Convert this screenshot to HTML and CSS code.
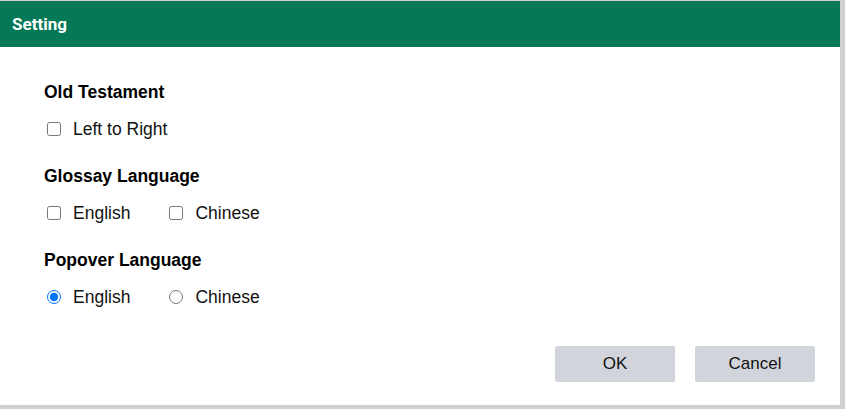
FILE: index.html
```html
<!DOCTYPE html>
<html>
<head>
<meta charset="utf-8">
<link rel="stylesheet" href="styles.css">
</head>
<body>
<div class="dialog">
  <div class="dialog-header">Setting</div>
  <div class="dialog-body">
    <div class="section">
      <div class="section-title">Old Testament</div>
      <div class="options">
        <label class="option"><input type="checkbox"><span>Left to Right</span></label>
      </div>
    </div>
    <div class="section">
      <div class="section-title">Glossay Language</div>
      <div class="options">
        <label class="option"><input type="checkbox"><span>English</span></label>
        <label class="option"><input type="checkbox"><span>Chinese</span></label>
      </div>
    </div>
    <div class="section">
      <div class="section-title">Popover Language</div>
      <div class="options">
        <label class="option"><input type="radio" name="pop" checked><span>English</span></label>
        <label class="option"><input type="radio" name="pop"><span>Chinese</span></label>
      </div>
    </div>
  </div>
  <div class="dialog-footer">
    <button class="btn">OK</button>
    <button class="btn">Cancel</button>
  </div>
</div>
</body>
</html>
```
FILE: styles.css
```css
html, body {
  margin: 0;
  padding: 0;
  background: #d0d0d0;
  width: 845px;
  height: 409px;
  overflow: hidden;
}
.dialog {
  width: 840px;
  height: 404px;
  margin-top: 1px;
  background: #fff;
  display: flex;
  flex-direction: column;
  font-family: "Liberation Sans", Arial, sans-serif;
  color: #111;
}
.dialog-header {
  height: 46px;
  line-height: 46px;
  background: #047857;
  color: #fff;
  font-family: Roboto, "Liberation Sans", sans-serif;
  font-weight: 700;
  font-size: 17px;
  padding-left: 12px;
}
.dialog-body {
  padding: 35px 0 0 44px;
  flex: 1;
}
.section {
  margin-bottom: 27px;
}
.section:last-child {
  margin-bottom: 0;
}
.section-title {
  font-size: 17.5px;
  font-weight: 700;
  line-height: 20px;
  color: #000;
  margin-bottom: 17px;
}
.options {
  display: flex;
  gap: 36px;
  height: 20px;
  align-items: center;
}
.option {
  display: flex;
  align-items: center;
  font-size: 17.5px;
  line-height: 20px;
}
.option input {
  width: 14px;
  height: 14px;
  margin: 0 12px 0 3px;
}
.dialog-footer {
  display: flex;
  justify-content: flex-end;
  gap: 20px;
  padding: 0 25px 23px 0;
}
.btn {
  width: 120px;
  height: 36px;
  border: none;
  border-radius: 2px;
  background: #d1d5db;
  color: #111;
  font-family: "Liberation Sans", Arial, sans-serif;
  font-size: 17px;
  padding: 0;
}
```
